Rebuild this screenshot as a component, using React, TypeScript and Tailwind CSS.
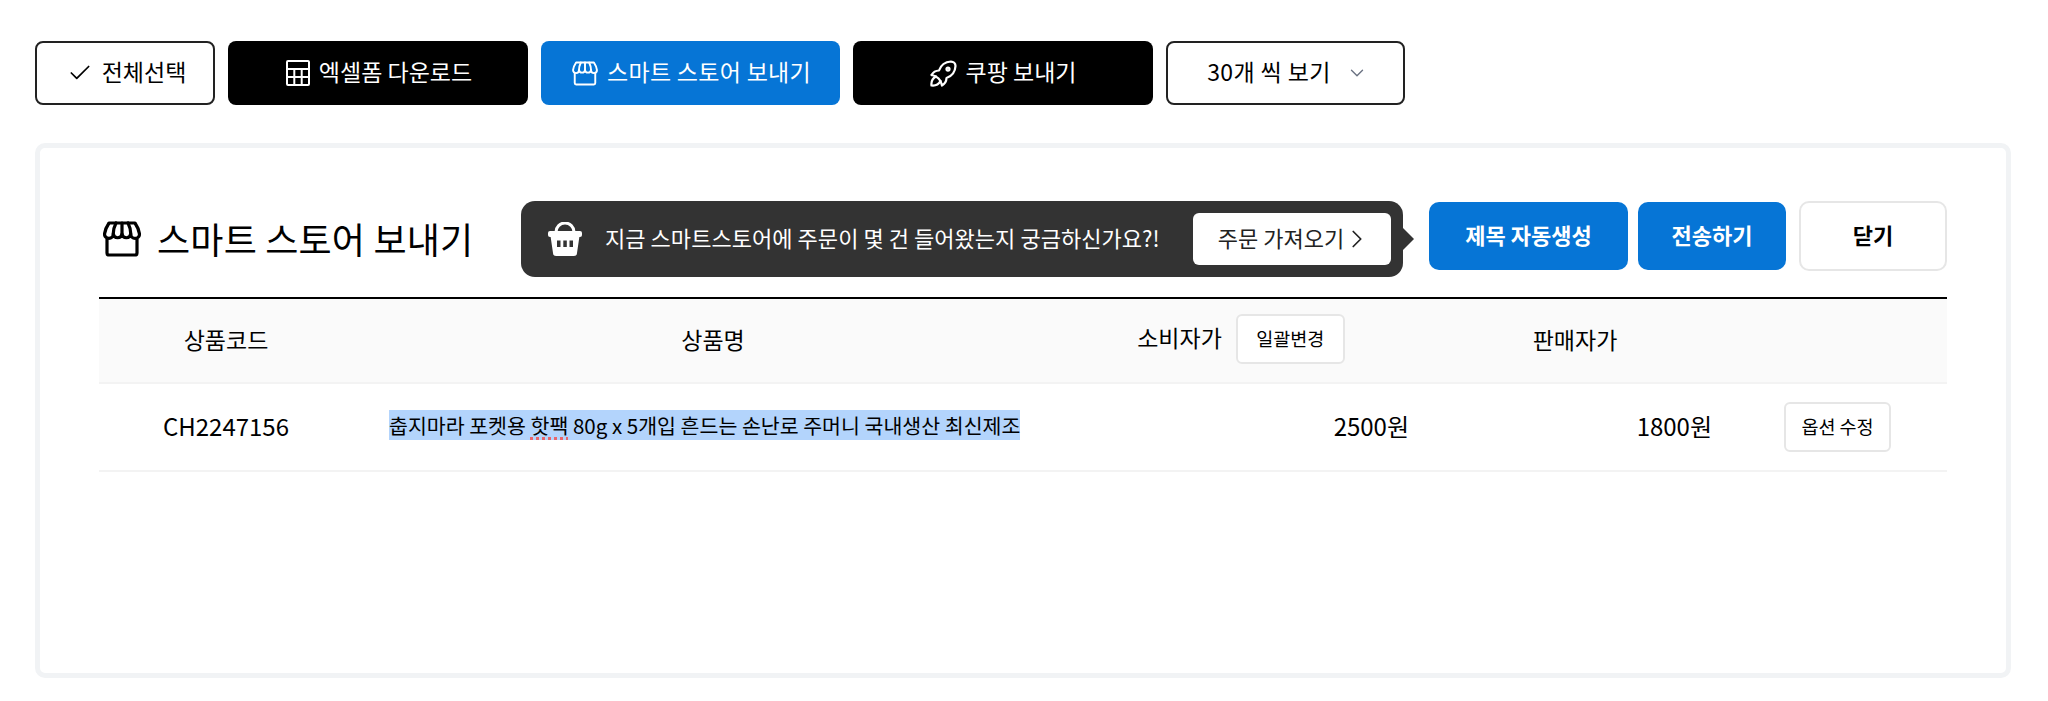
import { Check, ChevronDown, ChevronRight } from "lucide-react";

const FONT = "font-['Noto_Sans_CJK_KR','Noto_Sans',sans-serif]";

function StoreIcon({ className, stroke = 2.8 }: { className?: string; stroke?: number }) {
  return (
    <svg viewBox="0 0 38 36" fill="none" stroke="currentColor" strokeWidth={stroke} strokeLinejoin="round" strokeLinecap="round" className={className}>
      <path d="M6 2H32C34 5 36 9 36.500 13a4.400 4.400 0 0 1-8.800 0a4.400 4.400 0 0 1-8.700 0a4.400 4.400 0 0 1-8.700 0a4.400 4.400 0 0 1-8.800 0C2 9 4 5 6 2Z" />
      <path d="M13 2C11 6 10.200 9 10.200 13M19 2V13M25 2C27 6 27.800 9 27.800 13" />
      <path d="M4 18V32a2 2 0 0 0 2 2H32a2 2 0 0 0 2-2V18" />
    </svg>
  );
}

function CalcIcon() {
  return (
    <svg viewBox="0 0 24 26" fill="none" stroke="currentColor" strokeWidth={2} className="h-[26px] w-[24px]">
      <rect x="1" y="1" width="22" height="24" rx="1" />
      <path d="M1 9h22M1 17h22M8.300 9v16M15.700 9v16" />
    </svg>
  );
}

function RocketIcon() {
  return (
    <svg viewBox="3 3 18 18" fill="none" stroke="currentColor" strokeWidth={1.5} strokeLinejoin="round" strokeLinecap="round" className="h-[27px] w-[27px]">
      <path d="M4 13a8 8 0 0 1 7 7a6 6 0 0 0 3-5a9 9 0 0 0 6-8a3 3 0 0 0-3-3a9 9 0 0 0-8 6a6 6 0 0 0-5 3" />
      <path d="M7 14a6 6 0 0 0-3 6a6 6 0 0 0 6-3" />
      <circle cx="15" cy="9" r="1" />
    </svg>
  );
}

function BasketIcon() {
  return (
    <svg viewBox="0 0 34 34" className="h-[34px] w-[34px] shrink-0">
      <path d="M8 12V10a9 9 0 0 1 18 0v2" fill="none" stroke="#fff" strokeWidth={3} />
      <rect x="0" y="9" width="34" height="6" rx="2" fill="#fff" />
      <path d="M2.500 14H31.500L29 31a3 3 0 0 1-3 3H8a3 3 0 0 1-3-3Z" fill="#fff" />
      <path d="M9 18.500h3.500v6.500H9ZM15.300 18.500h3.500v6.500h-3.500ZM21.500 18.500H25v6.500h-3.500Z" fill="#333333" />
    </svg>
  );
}

export default function App() {
  return (
    <div className={`${FONT} h-[701px] w-[2048px] bg-white px-[35px] pt-[41px] text-black`}>
      {/* Toolbar */}
      <div className="flex h-[64px] items-stretch gap-[13px] text-[23px]">
        <button className="flex w-[180px] items-center justify-center gap-[9px] rounded-[8px] border-2 border-[#222222] bg-white pl-[3px]">
          <Check size={26} strokeWidth={1.6} />
          <span className="pb-[4px]">전체선택</span>
        </button>
        <button className="flex w-[300px] items-center justify-center gap-[9px] rounded-[8px] bg-black pl-[2px] text-white">
          <CalcIcon />
          <span className="pb-[4px]">엑셀폼 다운로드</span>
        </button>
        <button className="flex w-[299px] items-center justify-center gap-[9px] rounded-[8px] bg-[#0675d6] pl-[2px] text-white">
          <StoreIcon className="h-[25px] w-[26px]" />
          <span className="pb-[4px] tracking-[0.3px]">스마트 스토어 보내기</span>
        </button>
        <button className="flex w-[300px] items-center justify-center gap-[9px] rounded-[8px] bg-black text-white">
          <RocketIcon />
          <span className="pb-[4px]">쿠팡 보내기</span>
        </button>
        <button className="flex w-[239px] items-center justify-center gap-[15px] rounded-[8px] border-2 border-[#222222] bg-white pl-[4px]">
          <span className="pb-[4px] tracking-[0.4px]">30개 씩 보기</span>
          <ChevronDown size={22} strokeWidth={1.5} className="text-gray-500" />
        </button>
      </div>

      {/* Panel */}
      <div className="mt-[38px] h-[535px] w-[1976px] rounded-[10px] border-[5px] border-[#f1f3f5] bg-white px-[59px] pt-[53px]">
        <div className="flex h-[76px] items-start">
          <StoreIcon stroke={3.2} className="ml-[4px] mt-[20px] h-[36px] w-[38px]" />
          <h2 className="ml-[16px] mt-[10px] w-[364px] text-[36px] font-normal tracking-[0.2px]">스마트 스토어 보내기</h2>
          <div className="relative flex h-[76px] w-[882px] items-center rounded-[14px] bg-[#333333] pl-[27px] pr-[12px] text-white">
            <BasketIcon />
            <span className="ml-[23px] flex-1 pb-[3px] text-[22px] tracking-[0.05px]">지금 스마트스토어에 주문이 몇 건 들어왔는지 궁금하신가요?!</span>
            <button className="flex h-[52px] w-[198px] items-center justify-center rounded-[6px] bg-white text-[22px] text-[#222222]">
              <span className="pb-[3px] pl-[6px]">주문 가져오기</span>
              <ChevronRight size={30} strokeWidth={1.4} className="-ml-[2px]" />
            </button>
            <span className="absolute right-[-11px] top-[27px] h-0 w-0 border-y-[11px] border-l-[11px] border-y-transparent border-l-[#333333]" />
          </div>
          <button className="ml-[26px] mt-[1px] h-[68px] w-[199px] rounded-[10px] bg-[#0675d6] pb-[4px] text-[22px] font-bold text-white">제목 자동생성</button>
          <button className="ml-[10px] mt-[1px] h-[68px] w-[148px] rounded-[10px] bg-[#0675d6] pb-[4px] text-[22px] font-bold text-white">전송하기</button>
          <button className="ml-[13px] h-[70px] w-[148px] rounded-[10px] border-2 border-[#e6e6e6] bg-white pb-[4px] text-[22px] font-bold">닫기</button>
        </div>

        <div className="mt-[20px] border-t-2 border-black">
          <div className="grid h-[85px] grid-cols-[254px_720px_336px_332px_206px] items-center border-b-2 border-[#f3f3f3] bg-[#fafafa] text-center text-[23px]">
            <div className="pb-[2px]">상품코드</div>
            <div className="pb-[2px]">상품명</div>
            <div className="flex items-center justify-center gap-[14px] pb-[4px]">
              <span className="pb-[2px]">소비자가</span>
              <button className="flex h-[50px] w-[109px] items-center justify-center rounded-[6px] border-2 border-[#e6e6e6] bg-white text-[18.500px]">일괄변경</button>
            </div>
            <div className="pb-[2px]">판매자가</div>
            <div />
          </div>
          <div className="grid h-[88px] grid-cols-[254px_720px_336px_332px_206px] items-center border-b-2 border-[#f3f3f3] text-[24px]">
            <div className="pb-[3px] text-center">CH2247156</div>
            <div className="pb-[3px] pl-[36px] text-[20.550px]">
              <span className="bg-[#b3d4fc]">
                춥지마라 포켓용 <span className="underline decoration-[#e8656a] decoration-dotted decoration-[3px] underline-offset-[3px]">핫팩</span> 80g x 5개입 흔드는 손난로 주머니 국내생산 최신제조
              </span>
            </div>
            <div className="pb-[3px] text-right">2500원</div>
            <div className="pb-[3px] pr-[29px] text-right">1800원</div>
            <div className="pl-[43px]">
              <button className="flex h-[50px] w-[107px] items-center justify-center rounded-[6px] border-2 border-[#e6e6e6] bg-white text-[18.500px]">옵션 수정</button>
            </div>
          </div>
        </div>
      </div>
    </div>
  );
}
